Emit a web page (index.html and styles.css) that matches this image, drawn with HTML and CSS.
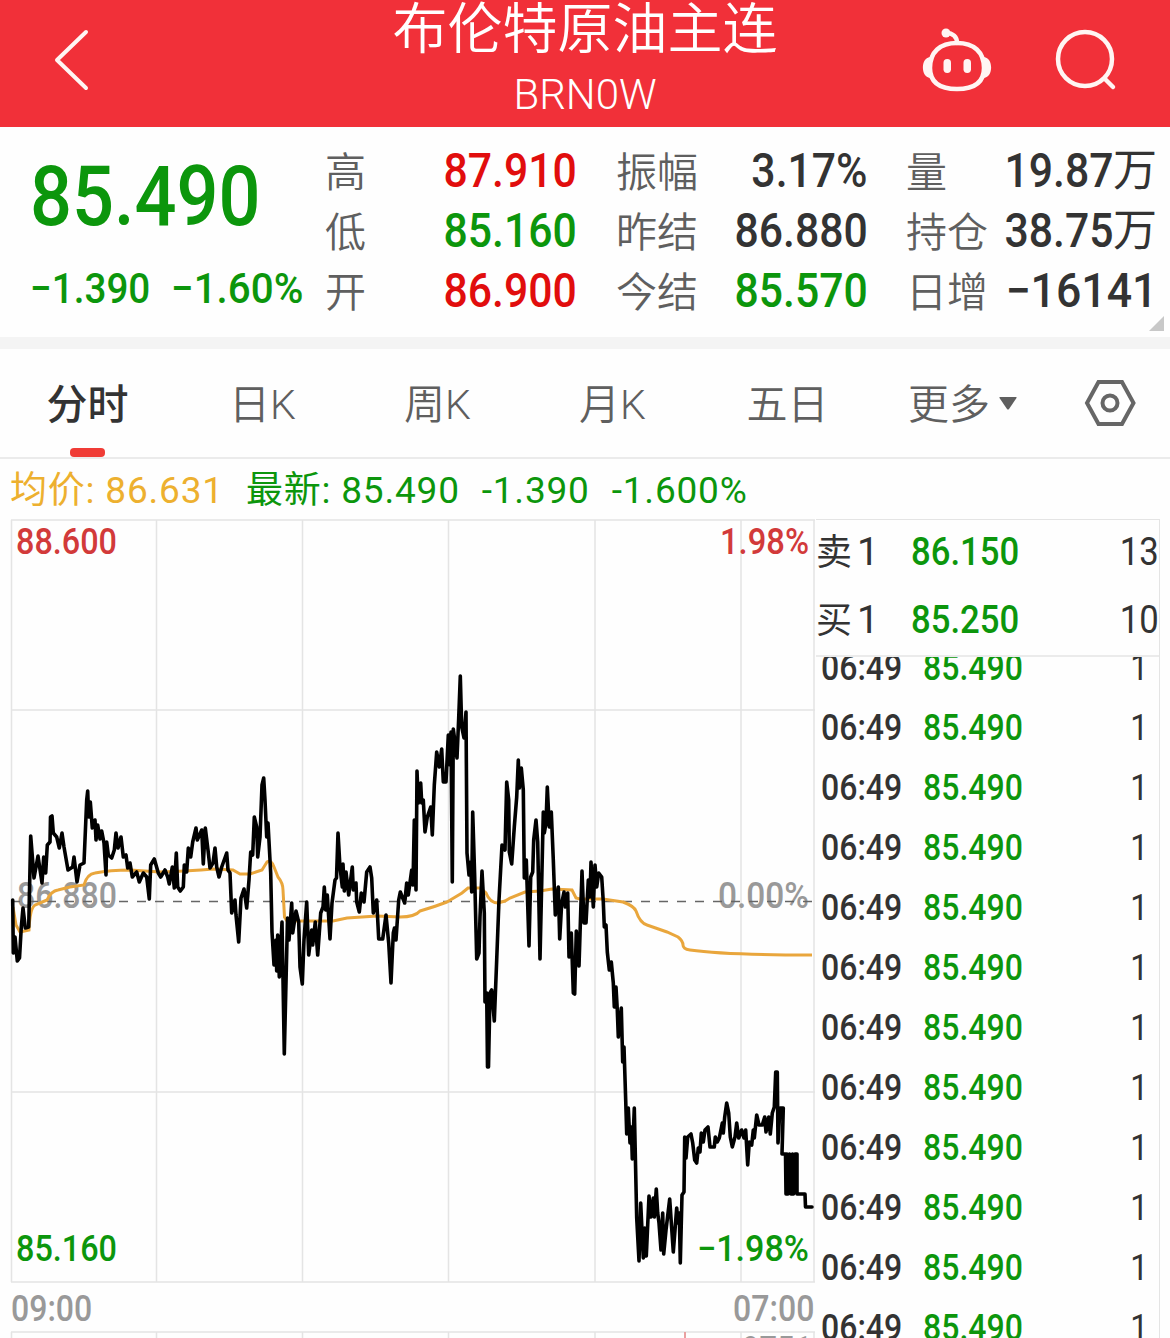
FILE: index.html
```html
<!DOCTYPE html>
<html lang="zh-CN">
<head>
    <meta charset="UTF-8">
    <meta name="viewport" content="width=device-width, initial-scale=1.0">
    <title>布伦特原油主连</title>
    <link rel="stylesheet" href="styles.css">
</head>
<body>

    <header class="header">
        <svg class="back" width="40" height="64" viewBox="0 0 40 64">
            <path d="M35 4 L6 32 L35 60"/>
        </svg>
        <div class="title">
            <h1>布伦特原油主连</h1>
            <p>BRN0W</p>
        </div>
        <div class="actions">
            <svg width="72" height="66" viewBox="0 0 72 66">
                <path d="M36 16 C36 10 32 6 25 6"/>
                <circle class="solid" cx="25" cy="6" r="4.5"/>
                <path d="M36 16 C53 16 63 25 63 41 C63 56 53 62 36 62 C19 62 9 56 9 41 C9 25 19 16 36 16 Z"/>
                <path class="solid" d="M9 30 C-.5 31 -.5 50 9 51 Z M63 30 C72.500 31 72.500 50 63 51 Z"/>
                <rect class="solid" x="22.500" y="32" width="7.500" height="14" rx="3.700"/>
                <rect class="solid" x="42.500" y="32" width="7.500" height="14" rx="3.700"/>
            </svg>
            <svg width="64" height="66" viewBox="0 0 64 66">
                <circle cx="31" cy="32" r="27"/>
                <path d="M51 52 L59 60"/>
            </svg>
        </div>
    </header>

    <section class="quote">
        <div class="last down">
            <div class="price"><span class="num">85.490</span></div>
            <div class="change"><span class="num">−1.390</span><span class="num">−1.60%</span></div>
        </div>
        <dl class="col col-1">
            <div><dt>高</dt><dd class="num up">87.910</dd></div>
            <div><dt>低</dt><dd class="num down">85.160</dd></div>
            <div><dt>开</dt><dd class="num up">86.900</dd></div>
        </dl>
        <dl class="col col-2">
            <div><dt>振幅</dt><dd class="num">3.17%</dd></div>
            <div><dt>昨结</dt><dd class="num">86.880</dd></div>
            <div><dt>今结</dt><dd class="num down">85.570</dd></div>
        </dl>
        <dl class="col col-3">
            <div><dt>量</dt><dd><span class="num">19.87</span><span class="unit">万</span></dd></div>
            <div><dt>持仓</dt><dd><span class="num">38.75</span><span class="unit">万</span></dd></div>
            <div><dt>日增</dt><dd class="num wide">−16141</dd></div>
        </dl>
        <i class="corner"></i>
    </section>

    <nav class="tabs">
        <a class="active">分时</a>
        <a>日K</a>
        <a>周K</a>
        <a>月K</a>
        <a>五日</a>
        <a class="more">更多<svg width="18" height="13" viewBox="0 0 18 13"><path d="M1 0 H17 Q18 0 17.500 1 L10 12 Q9 13 8 12 L.5 1 Q0 0 1 0 Z"/></svg></a>
        <a class="setting"><svg width="52" height="48" viewBox="0 0 52 48"><path d="M14.500 3 H38 L49.500 24 L38 45 H14.500 L3 24 Z"/><circle cx="26" cy="24" r="7.500"/></svg></a>
    </nav>

    <div class="info">
        <span class="avg">均价: 86.631</span>
        <span class="down">最新: 85.490</span>
        <span class="down">-1.390</span>
        <span class="down">-1.600%</span>
    </div>

    <main class="main">
        <div class="charts">
            <svg class="chart" width="806" height="764" viewBox="10 519 806 764">
                <path class="grid" d="M11 520 H815 M11 710 H815 M11 1092 H815 M11 1282 H815 M11.500 520 V1282 M156.500 520 V1282 M302.500 520 V1282 M448.500 520 V1282 M595 520 V1282 M741 520 V1282 M814 520 V1282"/>
                <g class="ref">
                    <text x="17" y="908" textLength="100" lengthAdjust="spacingAndGlyphs">86.880</text>
                    <text x="718" y="908" textLength="91" lengthAdjust="spacingAndGlyphs">0.00%</text>
                </g>
                <path class="zero" d="M11 901.500 H812"/>
                <path class="avg-line" d="M13 907 L16 925 L20 932 L29 930 Q30 908 35 905 L47 900 Q51 891 58 890 L70 887 L84 885 Q87 874 95 873 Q110 870 130 870 L160 872 Q190 871 213 869 L233 870 L240 874 H250 L262 870 L267 862 Q271 859 274 867 L278 877 Q283 883 283 890 L284.500 917 L287 921 H333 L347 918 L377 916 L400 917 Q415 917 420 911 Q434 907 447 902 L462 893 L468 888 H480 L486 893 Q490 903 498 903 L505 901 L510 898 L525 892 L540 891 L552 889 L572 890 L576 898 L580 899 H603 L623 902 Q634 906 636 911 Q640 923 647 925 L667 932 L678 937 Q683 941 683 945 Q683 949 690 950 Q725 955 812 955"/>
                <path class="price-line" d="M12.700 900 L13.300 953 L15 937 L17.300 961 L19.500 958 L21.300 927 L23 908 L25.300 928 L28.700 927 L30.700 836 L34 878 L38 856 L42 883 L43.700 857 L45.700 873 L47.300 845 L50 842 L50.500 817 L52 816 L53.300 833 L56.700 837 L59.300 848 L62 833 L64 847 L68 870 L72.700 867 L74 857 L77 882 L80 865 L84 863 L86.700 800 L87.700 791 L88.700 817 L90.300 802 L92.300 828 L95 820 L96 840 L97.700 825 L100 839 L101.700 831 L104 843 L106 875 L106.700 842 L108.300 855 L111.700 858 L114.300 850 L116 833 L118 848 L121 837 L123.300 857 L126 855 L127.700 868 L130 863 L132.300 877 L136.700 872 L139.300 882 L143.300 873 L146.700 877 L149.300 899 L150.700 865 L154.300 859 L158.300 873 L160.700 877 L165 870 L167.700 877 L169.300 884 L172.300 867 L174.300 888 L176.300 853 L177.700 887 L180.300 891 L183.300 887 L184.300 865 L186.700 872 L188.300 848 L190.700 857 L192.700 842 L196 828 L197.300 840 L201.700 830 L203.300 864 L205.300 828 L208 850 L210 868 L213 863 L215 848 L216.700 867 L219 877 L221.700 867 L226.700 853 L228 870 L230 873 L231.700 913 L235 900 L236 915 L238.700 942 L241 898 L244 889 L246.700 908 L249 880 L250.700 852 L252.700 855 L254.300 817 L256.700 827 L257.700 857 L260 837 L262 785 L263.700 778 L265 800 L266.700 837 L268 823 L270.700 873 L272 932 L274 965 L276 940 L276.700 971 L277.700 935 L279.300 977 L282 922 L284.300 1054 L287 940 L287.500 918 L289 940 L291.700 903 L292.700 933 L296 911 L298.700 922 L300 967 L302.300 984 L304 940 L306.700 902 L308.700 955 L311.700 930 L312.700 945 L315.300 922 L317.700 955 L320.700 913 L323 907 L324.300 887 L325.700 910 L327.300 895 L330 939 L332 903 L335 880 L336.500 878 L338 833 L340 867 L342.300 887 L343 864 L344.300 891 L346 872 L348.700 895 L352.300 867 L353.300 890 L356 883 L356.700 902 L359.300 912 L361.300 893 L364 902 L366.700 872 L370 867 L371.700 878 L373.300 913 L376.700 900 L378.700 939 L382.700 939 L386 915 L388.700 943 L391 983 L393.300 933 L394.500 928 L396 940 L398.700 900 L400.300 892 L404.700 903 L406.700 883 L408.300 895 L411.700 870 L413 885 L414.300 820 L416 890 L417 771 L418.300 803 L420.700 783 L421.700 803 L423.300 800 L425 832 L427.300 817 L430.700 807 L432.300 835 L434.300 785 L436.700 752 L439.300 767 L441.700 749 L443.300 782 L446 782 L448.300 735 L450 765 L451 732 L452.300 882 L453.300 729 L457 758 L458.700 718 L460.300 676 L461.700 727 L464 738 L466 712 L467 853 L469 875 L470.700 862 L471.700 892 L472.700 812 L474.700 877 L476.700 959 L479 953 L480 917 L482 871 L484.300 913 L485 1002 L486.700 993 L487.500 1067 L488.500 1067 L490 993 L491.700 990 L494.300 1021 L496.700 960 L499 900 L502 845 L505 850 L506.700 782 L508.700 800 L509.300 852 L511.700 864 L514.300 827 L516.700 797 L518.300 760 L519.300 788 L521.300 768 L523.300 790 L524.300 878 L526.300 860 L529 946 L530.700 877 L532.700 872 L533.700 840 L536 820 L537.700 842 L540 959 L542 870 L543.300 812 L544.300 833 L546 823 L547.300 787 L549.300 827 L551.300 812 L553.300 860 L555.300 915 L558.300 887 L559.700 939 L561.700 903 L564 892 L565.300 907 L567.700 893 L569 957 L571.300 933 L573.300 993 L574.700 994 L576.300 931 L579 966 L582 871 L584 923 L586 923 L588.300 880 L590 897 L591 862 L593.300 907 L595 865 L596.700 887 L598.700 873 L601.700 877 L603.300 902 L604.300 927 L606 925 L607.300 952 L609.300 970 L611.300 962 L613.300 983 L614.300 1007 L616 987 L617.300 1010 L618.300 1037 L621.300 1008 L622.700 1062 L624 1047 L625.700 1100 L626.700 1134 L628.300 1108 L630 1143 L631.300 1127 L632.300 1159 L634.300 1108 L636.700 1218 L639 1261 L640.700 1203 L643.300 1258 L644.700 1228 L646.300 1256 L649 1196 L651 1217 L653.300 1198 L654.300 1217 L656.300 1189 L657.700 1213 L659 1223 L661 1250 L662.700 1213 L663.700 1254 L666 1230 L669.700 1199 L673.300 1252 L676.700 1208 L678 1223 L679.300 1213 L680.300 1263 L682 1195 L684 1192 L684.700 1137 L686 1158 L687.700 1137 L691 1134 L692.700 1143 L694.700 1160 L696.700 1163 L698.300 1148 L700 1152 L701.300 1133 L703.300 1142 L705 1130 L708 1127 L710 1147 L714.300 1147 L715.300 1137 L717.300 1142 L719.300 1138 L722.300 1123 L723.300 1133 L724.700 1117 L726.700 1103 L728.700 1113 L730.300 1137 L732.300 1147 L735 1137 L736.700 1123 L738.700 1138 L741.700 1130 L744 1138 L745.700 1130 L747.700 1165 L749.300 1142 L751.700 1145 L753.300 1130 L754.300 1138 L756.700 1115 L759 1125 L762.300 1125 L764.700 1117 L766 1132 L768.700 1117 L770.300 1134 L772.300 1113 L774.300 1107 L775.700 1072 L777.300 1072 L778 1143 L780 1108 L783.300 1108 L782 1154 L785.500 1154 L786 1194 L787 1154 L788 1194 L789.500 1154 L791 1194 L792.500 1154 L793.500 1194 L795 1154 L797 1154 V1194 H805 L805.500 1207 H812"/>
                <text class="up-label" x="16" y="554" textLength="101" lengthAdjust="spacingAndGlyphs">88.600</text>
                <text class="up-label" x="720" y="554" textLength="89" lengthAdjust="spacingAndGlyphs">1.98%</text>
                <text class="down-label" x="16" y="1261" textLength="101" lengthAdjust="spacingAndGlyphs">85.160</text>
                <text class="down-label" x="697" y="1261" textLength="112" lengthAdjust="spacingAndGlyphs">−1.98%</text>
            </svg>
            <div class="times">
                <span class="num">09:00</span>
                <span class="num">07:00</span>
            </div>
            <svg class="volume" width="806" height="7" viewBox="10 1331 806 7">
                <path class="grid" d="M11 1332 H815 M11.500 1332 V1338 M156.500 1332 V1338 M302.500 1332 V1338 M448.500 1332 V1338 M595 1332 V1338 M741 1332 V1338 M814 1332 V1338"/>
                <path class="bar" d="M685 1332 V1338"/>
                <text class="vol-label" x="742" y="1362" textLength="70" lengthAdjust="spacingAndGlyphs">9751</text>
            </svg>
        </div>

        <aside class="book">
            <div class="orders">
                <div class="order"><span class="side">卖<b>1</b></span><span class="num down">86.150</span><span class="num qty">13</span></div>
                <div class="order"><span class="side">买<b>1</b></span><span class="num down">85.250</span><span class="num qty">10</span></div>
            </div>
            <div class="ticks">
                <div class="tick"><span class="num">06:49</span><span class="num down">85.490</span><span class="num qty">1</span></div>
                <div class="tick"><span class="num">06:49</span><span class="num down">85.490</span><span class="num qty">1</span></div>
                <div class="tick"><span class="num">06:49</span><span class="num down">85.490</span><span class="num qty">1</span></div>
                <div class="tick"><span class="num">06:49</span><span class="num down">85.490</span><span class="num qty">1</span></div>
                <div class="tick"><span class="num">06:49</span><span class="num down">85.490</span><span class="num qty">1</span></div>
                <div class="tick"><span class="num">06:49</span><span class="num down">85.490</span><span class="num qty">1</span></div>
                <div class="tick"><span class="num">06:49</span><span class="num down">85.490</span><span class="num qty">1</span></div>
                <div class="tick"><span class="num">06:49</span><span class="num down">85.490</span><span class="num qty">1</span></div>
                <div class="tick"><span class="num">06:49</span><span class="num down">85.490</span><span class="num qty">1</span></div>
                <div class="tick"><span class="num">06:49</span><span class="num down">85.490</span><span class="num qty">1</span></div>
                <div class="tick"><span class="num">06:49</span><span class="num down">85.490</span><span class="num qty">1</span></div>
                <div class="tick"><span class="num">06:49</span><span class="num down">85.490</span><span class="num qty">1</span></div>
            </div>
        </aside>
    </main>

</body>
</html>
```
FILE: styles.css
```css
* {
    box-sizing: border-box;
    margin: 0;
    padding: 0;
}

body {
    width: 1170px;
    height: 1338px;
    overflow: hidden;
    display: flex;
    flex-direction: column;
    background-color: #fefefe;
    color: #333;
    font-family: Roboto, "Noto Sans CJK SC", sans-serif;
}

svg {
    display: block;
    flex: none;
}

.num {
    display: inline-block;
    font-weight: 500;
    white-space: nowrap;
    transform: scaleX(0.89);
    transform-origin: left center;
}

.up {
    color: #e10d0d;
}

.down {
    color: #0c960c;
}

/* header */
.header {
    flex: none;
    height: 127px;
    display: grid;
    grid-template-columns: 1fr auto 1fr;
    background-color: #f13039;
    color: #fff;
}

.header svg {
    fill: none;
    stroke: #fff5f3;
    stroke-width: 4.5;
    stroke-linecap: round;
    stroke-linejoin: round;
}

.header .solid {
    fill: #fff5f3;
    stroke: none;
}

.header .back {
    margin: 28px 0 0 51px;
    stroke-width: 4;
}

.title {
    text-align: center;
}

.title h1 {
    height: 64px;
    font-size: 55px;
    font-weight: 350;
    line-height: 58px;
}

.title p {
    font-size: 42px;
    font-weight: 350;
    line-height: 62px;
}

.actions {
    display: flex;
    justify-content: flex-end;
    gap: 61px;
    padding: 27px 52px 0 0;
}

/* quote */
.quote {
    flex: none;
    position: relative;
    display: flex;
    height: 210px;
    padding-top: 14px;
}

.last {
    width: 325px;
    padding-left: 30px;
}

.price {
    height: 118px;
    font-size: 84px;
    line-height: 112px;
}

.price .num {
    transform: scaleX(0.88);
}

.change {
    display: flex;
    gap: 7px;
    font-size: 42px;
    line-height: 60px;
}

.change .num {
    width: 134px;
    transform: scaleX(0.92);
}

.change .num:last-child {
    transform: scaleX(0.96);
}

.col div {
    display: flex;
    justify-content: space-between;
    height: 60px;
    line-height: 60px;
}

.col dt {
    padding-top: 2px;
    font-size: 41px;
    font-weight: 350;
    color: #5f5f5f;
}

.col dd {
    font-size: 48px;
    transform-origin: right center;
}

.col-1 {
    width: 252px;
    margin-right: 39px;
}

.col-2 {
    width: 252px;
    margin-right: 38px;
}

.col-3 {
    width: 251px;
}

.col-3 dd {
    display: flex;
}

.col-3 .num {
    transform-origin: right center;
}

.col-3 .wide {
    transform: scaleX(0.93);
}

.unit {
    font-size: 44px;
}

.corner {
    position: absolute;
    right: 6px;
    bottom: 6px;
    border-left: 15px solid transparent;
    border-bottom: 15px solid #c8c8c8;
}

/* period tabs */
.tabs {
    flex: none;
    display: flex;
    height: 122px;
    border-top: 12px solid #f4f4f4;
    border-bottom: 2px solid #ebebeb;
    font-size: 41px;
    font-weight: 350;
    line-height: 113px;
    color: #5f5f5f;
}

.tabs a {
    position: relative;
    width: 175px;
    height: 108px;
    text-align: center;
}

.tabs .active {
    color: #333;
    font-weight: 500;
}

.tabs .active::after {
    content: "";
    position: absolute;
    left: 70px;
    bottom: 0;
    width: 35px;
    height: 9px;
    border-radius: 4px;
    background-color: #f03c36;
}

.tabs .more {
    display: flex;
    justify-content: center;
    gap: 9px;
}

.more svg {
    margin-top: 48px;
    fill: #5f5f5f;
}

.tabs .setting {
    flex: 1;
    display: flex;
    align-items: center;
    justify-content: center;
}

.setting svg {
    fill: none;
    stroke: #666;
    stroke-width: 4;
}

/* latest values */
.info {
    flex: none;
    display: flex;
    gap: 22px;
    height: 60px;
    padding-left: 10px;
    font-size: 37px;
    letter-spacing: 0.8px;
    line-height: 63px;
    white-space: nowrap;
}

.avg {
    color: #edb02f;
}

/* chart area */
.main {
    display: flex;
    height: 819px;
    padding-left: 10px;
}

.charts {
    width: 806px;
}

.grid {
    fill: none;
    stroke: #e4e4e4;
    stroke-width: 1.5;
}

.chart text,
.volume text {
    font-size: 36px;
    font-weight: 500;
}

.ref text,
.volume .vol-label {
    fill: #999;
}

.up-label {
    fill: #d23a3a;
}

.down-label {
    fill: #0c960c;
}

.zero {
    stroke: #666;
    stroke-width: 1.3;
    stroke-dasharray: 9 9;
}

.avg-line {
    fill: none;
    stroke: #e9a63c;
    stroke-width: 3;
}

.price-line {
    fill: none;
    stroke: #000;
    stroke-width: 3.6;
    stroke-linecap: round;
    stroke-linejoin: round;
}

.bar {
    stroke: #e9a0a0;
    stroke-width: 2;
}

.times {
    display: flex;
    justify-content: space-between;
    height: 48px;
    padding: 0 2px 0 1px;
    font-size: 36px;
    line-height: 52px;
    color: #999;
}

.times .num:last-child {
    transform-origin: right center;
}

/* order book */
.book {
    width: 344px;
    border-top: 1px solid #e4e4e4;
    border-right: 1px solid #e4e4e4;
}

.orders {
    height: 137px;
    border-bottom: 2px solid #ebebeb;
}

.order {
    display: flex;
    height: 68px;
    line-height: 64px;
    font-size: 39px;
}

.side {
    width: 95px;
    font-size: 36px;
}

.side b {
    margin-left: 5px;
    font-size: 39px;
    font-weight: 400;
}

.num.qty {
    margin-left: auto;
    font-weight: 450;
    transform-origin: right center;
}

.ticks {
    height: 681px;
    overflow: hidden;
}

.tick {
    display: flex;
    height: 60px;
    padding: 0 11px 0 5px;
    font-size: 36px;
    line-height: 61px;
}

.tick:first-child {
    margin-top: -19px;
}

.tick .num:first-child {
    width: 102px;
}
```
